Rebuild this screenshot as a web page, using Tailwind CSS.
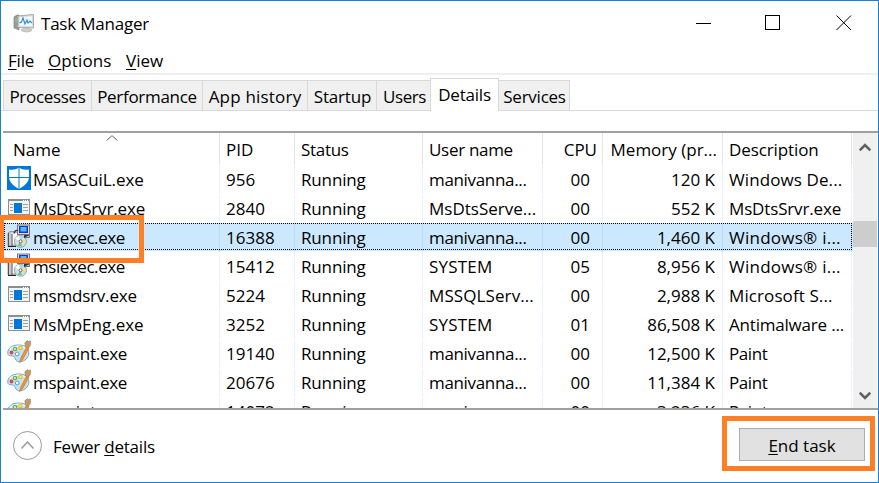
<!DOCTYPE html>
<html lang="en">
<head>
<meta charset="utf-8">
<title>Task Manager</title>
<script src="https://cdn.jsdelivr.net/npm/@tailwindcss/browser@4"></script>
</head>
<body class="overflow-hidden bg-white">
<svg class="hidden" aria-hidden="true">
  <symbol id="shield" viewBox="0 0 24 24">
    <rect width="24" height="24" fill="#0078d7"/>
    <path d="M12 1.500C9.500 3.500 6 4 2 3.500V11C2 16 6.500 20 12 23C17.500 20 22 16 22 11V3.500C18 4 14.500 3.500 12 1.500Z" fill="#fff"/>
    <path d="M12 1V23M2 11.500H22" stroke="#0078d7" stroke-width="1"/>
  </symbol>
  <symbol id="app" viewBox="0 0 24 24">
    <rect x="1.500" y="4.500" width="21" height="15" fill="#f4f4f4" stroke="#8a8f94"/>
    <path d="M1 5H23" stroke="#8a8f94" stroke-width="2"/>
    <path d="M16 5.500H22" stroke="#fff" stroke-dasharray="1 1"/>
    <rect x="7" y="8" width="8" height="10" fill="#0078d7"/>
    <path d="M3 9.500H6M3 12.500H6M3 15.500H6M16 9.500H21M16 12.500H21M16 15.500H21" stroke="#9aa0a5"/>
  </symbol>
  <symbol id="msi" viewBox="0 0 24 24">
    <path d="M1 9L3 7.500H9V22H1Z" fill="#c9c9c9" stroke="#8c8c8c" stroke-width=".800"/>
    <path d="M4.500 9H10V20H4.500Z" fill="#f6f6f6"/>
    <path d="M1.500 9V22M5 10V22" stroke="#555"/>
    <path d="M1 22.500H9" stroke="#222"/>
    <rect x="10.500" y="1" width="12" height="9.500" fill="#dcdccf" stroke="#77776f"/>
    <rect x="12" y="2" width="9" height="7" fill="#1038d8"/>
    <rect x="13.500" y="3" width="6" height="4.500" fill="#55b8ff"/>
    <path d="M18 11.500H22.500V13.500H19Z" fill="#ccc" stroke="#555" stroke-width=".800"/>
    <circle cx="13.500" cy="17.300" r="6" fill="#d5e0df" stroke="#87918f" stroke-width=".800"/>
    <path d="M13.500 17.300L8 14.500L11.500 11.800Z" fill="#fff"/>
    <path d="M13.500 17.300L13 11.500L17 12.500Z" fill="#9edcf1"/>
    <path d="M13.500 17.300L18.700 16L18 20Z" fill="#f2df6c"/>
    <path d="M13.500 17.300L15 22.500L10.500 21.800Z" fill="#62bfa0"/>
    <circle cx="13.500" cy="17.300" r="1.500" fill="#fff" stroke="#667"/>
    <path d="M7 9.500Q8 5.500 11 6.500" fill="none" stroke="#333" stroke-width="1.300"/>
    <path d="M17 11H22L17 14.500Z" fill="#333"/>
  </symbol>
  <symbol id="paint" viewBox="0 0 24 24">
    <path d="M11.500 5C5 5 .700 8.500 .700 12.800C.700 15.500 2.500 16 5 15.800C8 15.800 7.500 18 9 20C10.500 22.500 14.500 22.500 18 20C21.500 17.500 22.500 14 21.500 10.500C20.500 7 17 5 11.500 5Z" fill="#c3e2f4" stroke="#70a9ca"/>
    <path d="M3 9.500C6 6 14 5 18 8" stroke="#eef9ff" stroke-width="1.200" fill="none"/>
    <circle cx="4.500" cy="12.500" r="1.900" fill="#e4493a"/>
    <circle cx="8" cy="9" r="1.700" fill="#d8efcf" stroke="#64b64c" stroke-width="1.200"/>
    <circle cx="13.500" cy="8" r="1.700" fill="#fbeaa2" stroke="#edc02f" stroke-width="1.200"/>
    <circle cx="10.200" cy="14" r="1.900" fill="#f5fbff" stroke="#5c9ec3"/>
    <path d="M19.500 7L13.500 18.500L12.500 22.500L15.500 20L22 8Z" fill="#f0922e" stroke="#c46b1b" stroke-width=".500"/>
    <path d="M18.500 6.500Q17 2 19 1.800L20.500 .500L21.500 1.500L23.500 1L23.500 4Q23.500 6.500 21.500 8Z" fill="#c49a6c" stroke="#a07d55" stroke-width=".600"/>
  </symbol>
</svg>

<main class="flex h-[483px] w-[879px] flex-col border border-[#1b7fd3] bg-white font-['Open_Sans','Noto_Sans',sans-serif] text-[17px] leading-[24px] text-black">
  <header class="flex h-[45px] shrink-0 items-center pl-[12px]">
    <svg class="mr-[6px] h-[22px] w-[22px] shrink-0" viewBox="0 0 22 22">
      <path d="M1 4L4 2H6V17L1 15Z" fill="#9a9a9a" stroke="#777" stroke-width=".600"/>
      <path d="M2 6H4M2 8H4" stroke="#7fe060"/>
      <path d="M5 3L20.500 1.500V15L5 14.500Z" fill="#ddd" stroke="#aaa"/>
      <path d="M6.500 4.500L19 3.200V13L6.500 12.700Z" fill="#f2faff"/>
      <path d="M6.500 10L8.500 9L10 5L12 11L14 7L15 10L17 8L19 10" fill="none" stroke="#348fcb" stroke-width="1.200"/>
      <path d="M11 15H16L19 17Q18 19 13.500 19Q9 18.500 8 17Z" fill="#cfcfcf" stroke="#aaa" stroke-width=".600"/>
    </svg>
    <h1 class="tracking-[-0.22px]">Task Manager</h1>
    <svg class="ml-auto mr-[26px] h-[16px] w-[156px] shrink-0 -translate-y-px" viewBox="0 0 156 16" fill="none" stroke="#000" shape-rendering="crispEdges">
      <path d="M0 8.500H15"/><rect x="69.500" y=".500" width="14" height="14"/>
      <path d="M140.500 .500L155 15M155 .500L140.500 15" shape-rendering="auto"/>
    </svg>
  </header>
  <nav class="flex h-[29px] shrink-0 items-start border-b-2 border-[#f0f0f0] pl-[7px] pt-[3px]">
    <span class="w-[40px] tracking-[-0.2px]"><u class="underline-offset-2">F</u>ile</span>
    <span class="w-[78px] tracking-[0.1px]"><u class="underline-offset-2">O</u>ptions</span>
    <span><u class="underline-offset-2">V</u>iew</span>
  </nav>
  <div class="flex h-[36px] shrink-0 items-end border-b border-[#d9d9d9] pl-[2px]">
    <div class="flex h-[30px] w-[89px] items-center justify-center whitespace-nowrap border border-b-0 border-[#d9d9d9] bg-[#f0f0f0] pt-[3px] tracking-[-0.3px]">Processes</div>
    <div class="flex h-[30px] w-[111px] items-center justify-center whitespace-nowrap border-r border-t border-[#d9d9d9] bg-[#f0f0f0] pt-[3px] tracking-[-0.3px]">Performance</div>
    <div class="flex h-[30px] w-[105px] items-center justify-center whitespace-nowrap border-r border-t border-[#d9d9d9] bg-[#f0f0f0] pt-[3px] tracking-[0.2px]">App history</div>
    <div class="flex h-[30px] w-[69px] items-center justify-center whitespace-nowrap border-r border-t border-[#d9d9d9] bg-[#f0f0f0] pl-px pt-[3px] tracking-[-0.2px]">Startup</div>
    <div class="flex h-[30px] w-[53px] items-center justify-center whitespace-nowrap border-t border-[#d9d9d9] bg-[#f0f0f0] pl-[2px] pt-[3px] tracking-[-0.4px]">Users</div>
    <div class="-mb-px flex h-[33px] w-[69px] items-center justify-center whitespace-nowrap border border-b-0 border-[#d9d9d9] bg-white pb-px tracking-[-0.2px]">Details</div>
    <div class="flex h-[30px] w-[71px] items-center justify-center whitespace-nowrap border-r border-t border-[#d9d9d9] bg-[#f0f0f0] pl-px pt-[3px] tracking-[-0.25px]">Services</div>
  </div>

  <section class="ml-[2px] mt-[20px] flex h-[279px] shrink-0 overflow-hidden border-y-2 border-[#a0a0a0]">
    <div class="relative w-[850px] shrink-0">
      <div class="grid h-[32px] grid-cols-[217px_75px_128px_120px_60px_120px_129px] whitespace-nowrap pr-px">
        <div class="border-r border-[#e5e5e5] pl-[10px] pt-[5px]">Name</div>
        <div class="border-r border-[#e5e5e5] pl-[6px] pt-[5px]">PID</div>
        <div class="border-r border-[#e5e5e5] pl-[6px] pt-[5px] tracking-[-0.3px]">Status</div>
        <div class="border-r border-[#e5e5e5] pl-[6px] pt-[5px] tracking-[-0.3px]">User name</div>
        <div class="border-r border-[#e5e5e5] pr-[5px] pt-[5px] text-right">CPU</div>
        <div class="border-r border-[#e5e5e5] pr-[5px] pt-[5px] text-right">Memory (pr...</div>
        <div class="border-r border-[#e5e5e5] pl-[6px] pt-[5px] tracking-[-0.1px]">Description</div>
      </div>
      <svg class="absolute left-[103px] top-[2px] h-[6px] w-[12px]" viewBox="0 0 12 6" fill="none" stroke="#666"><path d="M.500 5.500L6 .700L11.500 5.500"/></svg>
      <div id="rows"></div>
    </div>
    <div class="flex w-[24px] shrink-0 flex-col items-center bg-[#f0f0f0]">
      <svg class="mt-[9px] h-[10px] w-[12px] shrink-0" viewBox="0 0 12 10" fill="none" stroke="#606060" stroke-width="2.600"><path d="M.700 8.300L6 3L11.300 8.300"/></svg>
      <div class="mt-[69px] h-[26px] w-[24px] shrink-0 bg-[#cdcdcd]"></div>
      <svg class="mb-[7px] mt-auto h-[10px] w-[12px] shrink-0" viewBox="0 0 12 10" fill="none" stroke="#606060" stroke-width="2.600"><path d="M.700 1.700L6 7L11.300 1.700"/></svg>
    </div>
  </section>

  <footer class="flex h-[72px] items-center justify-between pl-[12px] pr-[13px]">
    <div class="flex items-center">
      <svg class="mr-[10px] h-[30px] w-[30px]" viewBox="0 0 30 30" fill="none" stroke="#999"><circle cx="14.500" cy="14.500" r="14"/><path d="M8.500 17.500L14.500 11L20.500 17.500" stroke-width="1.500"/></svg>
      <span class="pt-[2px] tracking-[-0.2px]">Fewer <u class="underline-offset-2">d</u>etails</span>
    </div>
    <button class="mb-[3px] h-[33px] w-[126px] border border-[#adadad] bg-[#e1e1e1] pt-[2px]"><u class="underline-offset-2">E</u>nd task</button>
  </footer>
</main>
<div class="pointer-events-none absolute left-[-1px] top-[215px] h-[48px] w-[145px] border-5 border-[#ff7f27]"></div>
<div class="pointer-events-none absolute left-[722px] top-[416px] h-[55px] w-[153px] border-5 border-[#ff7f27]"></div>

<script>
const processes = [
  ['shield','MSASCuiL.exe','956','manivanna...','00','120 K','Windows De...'],
  ['app','MsDtsSrvr.exe','2840','MsDtsServe...','00','552 K','MsDtsSrvr.exe'],
  ['msi','msiexec.exe','16388','manivanna...','00','1,460 K','Windows® i...'],
  ['msi','msiexec.exe','15412','SYSTEM','05','8,956 K','Windows® i...'],
  ['app','msmdsrv.exe','5224','MSSQLServ...','00','2,988 K','Microsoft S...'],
  ['app','MsMpEng.exe','3252','SYSTEM','01','86,508 K','Antimalware ...'],
  ['paint','mspaint.exe','19140','manivanna...','00','12,500 K','Paint'],
  ['paint','mspaint.exe','20676','manivanna...','00','11,384 K','Paint'],
  ['paint','mspaint.exe','14072','manivanna...','00','3,236 K','Paint']
];
const nameTracking = {
  'MSASCuiL.exe': 'tracking-[-0.05px]', 'MsDtsSrvr.exe': 'tracking-[-0.15px]', 'msiexec.exe': 'tracking-[-0.45px]',
  'msmdsrv.exe': 'tracking-[-0.2px]', 'MsMpEng.exe': '', 'mspaint.exe': 'tracking-[-0.25px]'
};
const userTracking = {
  'manivanna...': 'tracking-[-0.33px]', 'MsDtsServe...': '', 'MSSQLServ...': 'tracking-[0.1px]', 'SYSTEM': 'tracking-[0.2px]'
};
const descTracking = {
  'Windows De...': 'tracking-[0.1px]', 'MsDtsSrvr.exe': 'tracking-[-0.15px]', 'Windows® i...': 'tracking-[0.25px]',
  'Microsoft S...': 'tracking-[0.1px]', 'Antimalware ...': 'tracking-[-0.2px]', 'Paint': 'tracking-[-0.4px]'
};
document.getElementById('rows').innerHTML = processes.map(([icon, name, pid, user, cpu, mem, desc], i) => {
  const sel = i === 2;
  const line = sel ? 'border-r border-[#b9dcfa]' : 'border-r border-[#e9f2fc]';
  return `<div class="relative grid h-[29px] grid-cols-[217px_75px_128px_120px_60px_120px_129px] whitespace-nowrap pr-px pt-px leading-[28px] ${sel ? 'bg-linear-to-b from-[#cce8ff] from-[28px] to-white to-[28px]' : ''}">
    <div class="${line} flex pl-[4px]"><svg class="mr-[2px] h-[24px] w-[24px] shrink-0"><use href="#${icon}"/></svg><span class="${nameTracking[name]}">${name}</span></div>
    <div class="${line} pl-[6px]">${pid}</div>
    <div class="${line} pl-[6px] tracking-[-0.15px]">Running</div>
    <div class="${line} pl-[6px] ${userTracking[user]}">${user}</div>
    <div class="${line} pr-[12px] text-right">${cpu}</div>
    <div class="${line} pr-[7px] text-right">${mem}</div>
    <div class="${line} pl-[6px] ${descTracking[desc]}">${desc}</div>
    ${sel ? '<i class="absolute left-px right-px top-0 h-[27px] border border-dotted border-black"></i>' : ''}
  </div>`;
}).join('');
</script>
</body>
</html>
